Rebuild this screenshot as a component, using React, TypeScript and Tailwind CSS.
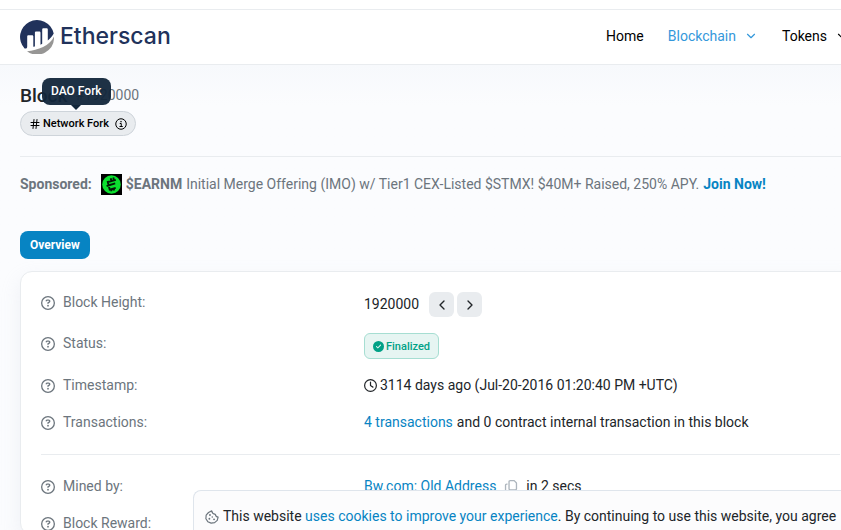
import type React from "react";
import { ChevronDown, ChevronLeft, ChevronRight, Hash } from "lucide-react";
import { FaCircleCheck, FaRegCircleQuestion, FaRegClock, FaRegCopy } from "react-icons/fa6";

// ─── Drawings ─────────────────────────────────────────────────────────────────
const LogoMark: React.FC = () => (
  <svg viewBox="0 0 34 34" className="size-[34px]" aria-hidden="true">
    <path
      fill="#21325b"
      d="M4.600 28.600A17 17 0 1 1 33.700 13.600C32.500 16 30.600 18.400 27.800 20.600V9.600c0-.9-.5-1.400-1.400-1.400h-2.800c-.9 0-1.400.5-1.400 1.400v14.200l-1.700.9V13c0-.9-.5-1.400-1.400-1.400h-2.800c-.9 0-1.400.5-1.400 1.400v13.400l-1.600.4V16.600c0-.9-.5-1.400-1.400-1.400H8.600c-.9 0-1.400.5-1.400 1.400v9.800c0 1.500-.8 2.300-2.600 2.200z"
    />
    <path fill="#979695" d="M34 16.500A17 17 0 0 1 7 31.200C18 30.500 30 25.500 34 16.500z" />
  </svg>
);

const InfoIcon: React.FC = () => (
  <svg viewBox="0 0 24 24" className="size-3" fill="none" stroke="currentColor" strokeWidth="2" aria-hidden="true">
    <circle cx="12" cy="12" r="10.5" />
    <path d="M9.5 11h3v6M9 17h6.5" />
    <circle cx="12" cy="7.3" r="1" fill="currentColor" strokeWidth="1" />
  </svg>
);

const EarnmIcon: React.FC = () => (
  <svg viewBox="0 0 21 21" className="size-[21px]" aria-hidden="true">
    <path fill="#000" d="M0 0h21v21H0z" />
    <circle cx="10.5" cy="10.5" r="9.3" fill="#0be02f" />
    <path
      fill="none"
      stroke="#041a08"
      strokeWidth="1.9"
      d="M14.8 5.8 6.800 8l1.900 7.600 6-1.800M5.600 12l8.600-2.600M9.700 4.200l.6 2.400M12.300 3.600l.6 2.400M10 15l.6 2.200M12.600 14.200l.6 2.200"
    />
  </svg>
);

const CookieIcon: React.FC = () => (
  <svg viewBox="0 0 24 24" className="size-3.5 shrink-0 text-[#6c757d]" fill="none" stroke="currentColor" strokeWidth="2" aria-hidden="true">
    <path d="M11.5 1.5 6 4.300 2 8.800 1.500 15l3.300 5 5.700 2.500 6-.8 4.500-4L22.500 12c-2.600 0-4.500-1.600-4.800-4.400C14.500 7 12 5 11.500 1.500z" strokeLinejoin="round" />
    <g fill="currentColor" stroke="none">
      <circle cx="8.5" cy="8.5" r="1.6" />
      <circle cx="7.5" cy="15" r="1.6" />
      <circle cx="12.5" cy="12" r="1.4" />
      <circle cx="15.5" cy="16" r="1.6" />
    </g>
  </svg>
);

// ─── Header ───────────────────────────────────────────────────────────────────
const Header: React.FC = () => (
  <header className="mt-[9px] flex h-14 items-center justify-between border-y border-[#e9ecef] bg-white pl-5">
    <a href="#home" className="flex items-center gap-1.5 text-[#21325b]">
      <LogoMark />
      <span className="pb-0.5 font-['Inter',sans-serif] text-[23px] leading-8 font-medium">Etherscan</span>
    </a>
    <nav className="-mr-2 flex items-center gap-6 pb-0.5 text-black">
      <a href="#home">Home</a>
      <a href="#blockchain" className="flex items-center gap-2 text-[#3498db]">
        Blockchain
        <ChevronDown className="size-3.5" />
      </a>
      <a href="#tokens" className="flex items-center gap-2">
        Tokens
        <ChevronDown className="size-3.5" />
      </a>
    </nav>
  </header>
);

// ─── Overview rows ────────────────────────────────────────────────────────────
const Row: React.FC<{ label: string; children?: React.ReactNode }> = ({ label, children }) => (
  <div className="flex items-start">
    <dt className="flex w-[323px] shrink-0 items-center gap-2 text-[#6c757d]">
      <FaRegCircleQuestion className="size-3.5" />
      {label}:
    </dt>
    <dd className="flex items-center whitespace-nowrap">{children}</dd>
  </div>
);

const OverviewCard: React.FC = () => (
  <section className="-mr-10 rounded-xl border border-[#e9ecef] bg-white px-5 pt-5 shadow-[0_8px_19px_rgba(189,197,209,0.2)]">
    <dl className="flex flex-col gap-4">
      <Row label="Block Height">
        1920000
        <div className="ml-2.5 flex gap-[3px]">
          <button type="button" aria-label="Previous block" className="grid size-[25px] place-items-center rounded-md bg-[#e9ecef]">
            <ChevronLeft className="size-4" />
          </button>
          <button type="button" aria-label="Next block" className="grid size-[25px] place-items-center rounded-md bg-[#e9ecef]">
            <ChevronRight className="size-4" />
          </button>
        </div>
      </Row>
      <Row label="Status">
        <span className="flex h-[26px] items-center gap-0.5 rounded-md border border-[#a6ded2] bg-[#e6f5f2] px-2 text-[11px] font-medium text-[#00a186]">
          <FaCircleCheck className="size-[11px]" />
          Finalized
        </span>
      </Row>
      <Row label="Timestamp">
        <FaRegClock className="mr-[3px] size-[13px]" />
        3114 days ago (Jul-20-2016 01:20:40 PM +UTC)
      </Row>
      <Row label="Transactions">
        <a href="#txs" className="mr-1 text-[#0784c3]">4 transactions</a>
        and 0 contract internal transaction in this block
      </Row>
    </dl>
    <hr className="my-[21px] border-[#e9ecef]" />
    <dl className="flex flex-col gap-4">
      <Row label="Mined by">
        <a href="#miner" className="text-[#0784c3]">Bw.com: Old Address</a>
        <button type="button" aria-label="Copy address" className="mx-2 text-[#adb5bd]">
          <FaRegCopy className="size-3.5" />
        </button>
        in 2 secs
      </Row>
      <Row label="Block Reward" />
    </dl>
  </section>
);

// ─── App ──────────────────────────────────────────────────────────────────────
const App: React.FC = () => (
  <div className="h-screen overflow-hidden bg-white font-['Roboto',sans-serif] text-[14px] leading-[21px] text-[#212529]">
    <Header />
    <main className="bg-[#fbfcfe] bg-linear-to-b from-[#f7f9fc] to-[#fbfcfe] to-[40px] px-5 pt-5">
      <div className="relative">
        <h1 className="flex items-center gap-2 text-[19px] font-medium">
          Block
          <span className="text-[14px] font-normal text-[#6c757d]">#1920000</span>
        </h1>
        <span className="mt-[5px] flex h-[25px] w-fit items-center gap-0.5 rounded-full border border-[#ced4da] bg-[#e9ecef] px-2 text-[11px] font-medium text-black">
          <Hash className="size-3" />
          <span className="mr-1">Network Fork</span>
          <InfoIcon />
        </span>
        <div role="tooltip" className="absolute -top-[7px] left-[22px] rounded-lg bg-[#12263b]/95 px-[9px] py-[3px] text-[12px] font-medium text-white">
          DAO Fork
          <span className="absolute top-full left-1/2 -translate-x-1/2 border-x-[5px] border-t-[5px] border-x-transparent border-t-[#12263b]" />
        </div>
      </div>

      <p className="-mr-5 mt-5 flex items-center gap-1 border-t border-[#e9ecef] pt-[17px] whitespace-nowrap text-[#6c757d]">
        <b className="mr-[5px]">Sponsored:</b>
        <EarnmIcon />
        <b>$EARNM</b>
        Initial Merge Offering (IMO) w/ Tier1 CEX-Listed $STMX! $40M+ Raised, 250% APY.
        <a href="#join" className="font-bold text-[#0784c3]">Join Now!</a>
      </p>

      <button type="button" className="mt-9 mb-3 block h-7 rounded-lg bg-[#0784c3] px-2.5 text-[12px] font-bold text-white">
        Overview
      </button>

      <OverviewCard />
    </main>

    <aside className="fixed right-0 bottom-0 left-[193px] flex h-10 items-center gap-1 overflow-hidden rounded-tl-lg border-t border-l border-[#dfe5ec] bg-[#fcfcfd] pt-3 pl-[11px] whitespace-nowrap">
      <CookieIcon />
      <p>
        This website <a href="#cookies" className="text-[#0784c3]">uses cookies to improve your experience</a>. By continuing to use this website, you agree
      </p>
    </aside>
  </div>
);

export default App;
